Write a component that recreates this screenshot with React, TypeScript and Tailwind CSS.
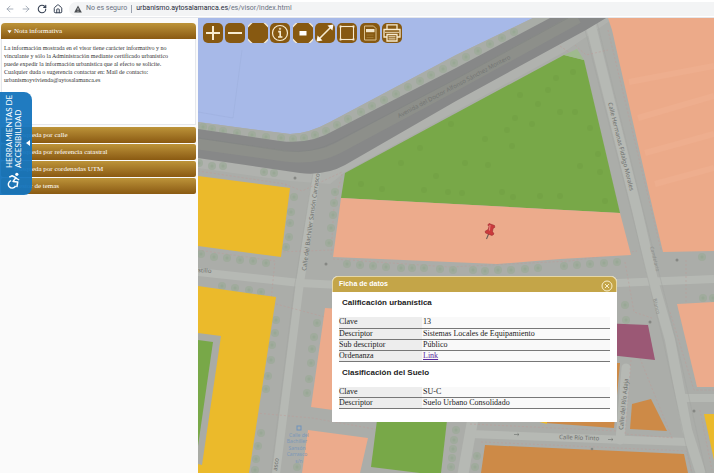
import { useState } from "react";
import { ArrowLeft, ArrowRight, House, RotateCw } from "lucide-react";

type Row = { label: string; value: string; href?: string };

const sections = [
  "Búsqueda por calle",
  "Búsqueda por referencia catastral",
  "Búsqueda por cordenadas UTM",
  "Gestor de temas",
];

const calificacion: Row[] = [
  { label: "Clave", value: "13" },
  { label: "Descriptor", value: "Sistemas Locales de Equipamiento" },
  { label: "Sub descriptor", value: "Público" },
  { label: "Ordenanza", value: "Link", href: "#ordenanza" },
];

const clasificacion: Row[] = [
  { label: "Clave", value: "SU-C" },
  { label: "Descriptor", value: "Suelo Urbano Consolidado" },
];

// icons are drawn on a 20x20 grid
const tools = [
  { name: "Acercar", icon: <path d="M10 3v14M3 10h14" strokeWidth="2" /> },
  { name: "Alejar", icon: <path d="M3 10h14" strokeWidth="2" /> },
  { name: "Vista completa", icon: <Corners /> },
  {
    name: "Información",
    icon: (
      <>
        <circle cx="10" cy="10" r="7.5" strokeWidth="1.2" />
        <path d="M8.2 8.6h2v5.2M8 14h4.4" strokeWidth="1.6" />
        <circle cx="10" cy="5.8" r="0.7" strokeWidth="1" />
      </>
    ),
  },
  {
    name: "Zoom por ventana",
    icon: (
      <>
        <Corners />
        <rect x="6.5" y="8" width="7" height="4.5" fill="#fff" stroke="none" />
      </>
    ),
  },
  {
    name: "Medir distancia",
    icon: (
      <>
        <path d="M4 16 16 4" strokeWidth="1.6" />
        <path d="M18.5 1.5 17.4 7.5 12.5 2.6ZM1.5 18.5 2.6 12.5 7.5 17.4Z" fill="#fffaf0" stroke="none" />
      </>
    ),
  },
  {
    name: "Medir área",
    icon: (
      <>
        <rect x="3.5" y="3.5" width="13" height="13" strokeWidth="1.1" />
        <path d="M2.6 3.5h1.8M15.6 3.5h1.8M2.6 16.5h1.8M15.6 16.5h1.8" strokeWidth="2" />
      </>
    ),
  },
  {
    name: "Ficha",
    icon: (
      <>
        <path d="M4.5 3h9l2.500 2.500V17H4.500Z" strokeWidth="1" stroke="#d9c08d" />
        <rect x="6" y="6" width="8.500" height="3.200" fill="#f3e7cc" stroke="none" />
        <path d="M6.500 12h7M6.500 14.500h7" strokeWidth="0.6" stroke="#b08b45" />
      </>
    ),
  },
  {
    name: "Imprimir",
    icon: (
      <>
        <path d="M5 6V1.8h10V6M5 14H2V6.5h16V14h-3" strokeWidth="1.3" />
        <path d="M3 9.3h14" strokeWidth="0.9" />
        <path d="M5 11.500h10v6.500H5Z" strokeWidth="1.300" />
        <path d="M6.500 13.800h7M6.500 15.900h7" strokeWidth="1" />
      </>
    ),
  },
];

const trees = [
  // avenue
  [203, 127], [212, 129], [223, 131], [237, 133], [252, 135], [266, 137], [281, 138], [293, 139],
  [304, 138], [315, 135], [326, 131], [337, 125], [348, 119], [361, 112], [372, 106], [384, 100],
  [396, 94], [408, 87], [420, 81], [431, 75], [443, 69], [454, 63], [466, 57], [478, 51], [490, 44],
  [502, 38], [514, 32],
  // left blocks
  [199, 163], [212, 166], [223, 166], [264, 172], [274, 173],
  [294, 197], [291, 212], [290, 223], [289, 237], [286, 247],
  [201, 254], [214, 257], [227, 258], [240, 260], [253, 261], [266, 263],
  [222, 286], [235, 288], [249, 290], [261, 292],
  [276, 320], [275, 333], [272, 345], [271, 360], [268, 376], [266, 389],
  [261, 433], [258, 446], [256, 459], [255, 470],
  [335, 192], [334, 203], [333, 215], [331, 228], [329, 243],
  [317, 323], [314, 337], [312, 349], [311, 363], [309, 379], [307, 393], [297, 467],
  // under the parcel
  [347, 264], [360, 265], [373, 266], [386, 267], [401, 268], [412, 268], [424, 268], [440, 269],
  [453, 270], [473, 270], [485, 271], [498, 270], [511, 270], [525, 269], [538, 268], [564, 266],
  [577, 265], [590, 264], [604, 263], [617, 262], [625, 305], [626, 320], [702, 257], [703, 298], [713, 298],
  [456, 430], [454, 440], [453, 449], [452, 458], [451, 467], [477, 456], [475, 467],
];

// trees seen through the park tint
const parkTrees = [
  [556, 78], [573, 72], [520, 95], [538, 104], [515, 118], [532, 124], [507, 130], [560, 112],
  [575, 112], [590, 128], [485, 139], [465, 163], [488, 165], [512, 146], [580, 166], [598, 154],
  [600, 172], [401, 163], [420, 148], [382, 189], [424, 190], [448, 192], [462, 193], [502, 192],
  [513, 197], [540, 196], [560, 196], [605, 201], [548, 90], [451, 124], [436, 176], [361, 184],
];

function Corners() {
  return (
    <path
      d="M0 4.500V2.500L2.500 0H4.500ZM20 4.500V2.500L17.500 0H15.500ZM0 15.500v2L2.500 20h2ZM20 15.500v2L17.500 20h-2Z"
      fill="#f7ecd6"
      stroke="none"
    />
  );
}

function BrowserBar() {
  return (
    <header className="flex h-[18px] shrink-0 items-center border-b border-gray-200 bg-white pl-[5px] text-[7px]">
      <nav className="flex items-center gap-[6px]">
        <button aria-label="Atrás" className="text-gray-400">
          <ArrowLeft size={10} />
        </button>
        <button aria-label="Adelante" className="text-gray-400">
          <ArrowRight size={10} />
        </button>
        <button aria-label="Recargar" className="text-gray-700">
          <RotateCw size={10} strokeWidth={2.6} />
        </button>
        <button aria-label="Inicio" className="text-gray-700">
          <House size={10} strokeWidth={2.4} />
        </button>
      </nav>
      <div className="ml-[6px] flex h-[14px] flex-1 items-center rounded-l-full bg-[#f3f4f5] pl-[5px] font-[Roboto,sans-serif]">
        <svg viewBox="0 0 10 10" className="h-2 w-2">
          <path d="M5 .5 9.8 9.5H.2Z" fill="#4b4e52" />
          <path d="M5 4v2.6M5 7.4v1" stroke="#f3f4f5" />
        </svg>
        <span className="ml-1 text-gray-500">No es seguro</span>
        <span className="mx-1 h-2 w-px bg-gray-400" />
        <span className="text-gray-500">
          <span className="text-gray-800">urbanismo.aytosalamanca.es</span>
          /es/visor/index.html
        </span>
      </div>
    </header>
  );
}

function Sidebar() {
  return (
    <aside className="relative w-[198px] shrink-0 bg-[#fafafa] px-px pt-[5px] font-['Liberation_Serif',serif]">
      <div className="mr-px">
        <button className="flex h-4 w-full items-center gap-[2px] rounded-t-sm bg-linear-to-b from-[#bd9439] to-[#8a5a12] pl-[6px] text-[7px] text-white">
          <svg viewBox="0 0 6 6" className="h-[5px] w-[5px]">
            <path d="M.5 1.5h5L3 5Z" fill="currentColor" />
          </svg>
          Nota informativa
        </button>
        <p className="h-[86px] border border-t-0 border-gray-200 bg-white px-[2px] pt-[5px] text-[6px] leading-[8px] text-[#333]">
          La información mostrada en el visor tiene carácter informativo y no
          <br />
          vinculante y sólo la Administración mediante certificado urbanístico
          <br />
          puede expedir la información urbanística que al efecto se solicite.
          <br />
          Cualquier duda o sugerencia contactar en: Mail de contacto:
          <br />
          urbanismoyvivienda@aytosalamanca.es
        </p>
        <div className="mt-[2px] flex flex-col gap-px">
          {sections.map((s) => (
            <button
              key={s}
              className="h-4 rounded-xs bg-linear-to-b from-[#bd9439] to-[#8a5a12] pl-[13px] text-left text-[7px] text-white"
            >
              {s}
            </button>
          ))}
        </div>
      </div>

      <button className="absolute top-[74px] left-0 flex h-[103px] w-8 rounded-r-lg bg-[#1474bd]/95 font-['Lato',sans-serif] text-white">
        <span className="flex h-full w-7 rotate-180 items-center justify-start gap-1 pt-[6px] text-left text-[8px] leading-[9px] [writing-mode:vertical-rl]">
          <svg viewBox="0 0 14 18" className="h-[17px] w-[14px] shrink-0 rotate-180" fill="none" stroke="#fff">
            <circle cx="10" cy="2.500" r="1.700" fill="#fff" stroke="none" />
            <path d="M2 5.500 5 4 9 6 6 10l5 .5-1 5.500" strokeWidth="1.600" strokeLinejoin="round" />
            <path d="M4 9.200a4 4 0 1 0 4.700 5.500" strokeWidth="1.500" />
            <path d="M9 6.500 12.500 8.500" strokeWidth="1.300" />
          </svg>
          <span>
            HERRAMIENTAS DE
            <br />
            ACCESIBILIDAD
          </span>
        </span>
        <svg viewBox="0 0 4 6" className="absolute top-12 right-[2px] h-[6px] w-1">
          <path d="M4 0v6L0 3Z" fill="#fff" />
        </svg>
      </button>
    </aside>
  );
}

function CityMap() {
  return (
    <svg
      viewBox="198 18 516 455"
      preserveAspectRatio="xMinYMin slice"
      className="absolute inset-0 h-full w-full font-['Noto_Sans',sans-serif]"
      role="img"
      aria-label="Mapa urbanístico"
    >
      <rect x="198" y="18" width="516" height="455" fill="#abada9" />

      {/* campus */}
      <path d="M198 18H533L508 30 456 55 330 122Q308 134 290 134L250 129 198 122Z" fill="#a7b9e8" />
      <path d="M242 50 233 118 198 112" fill="none" stroke="#9db0de" strokeWidth=".6" />

      {/* sidewalk north of the avenue */}
      <path d="M198 122 250 129 290 134Q308 134 330 122L456 55 533 18H550L456 68 335 130Q310 145 290 142L198 129Z" fill="#a9ada7" />

      {/* streets */}
      <path d="M198 158 300 173Q325 176 345 165L456 101 606 18H614L564 52 345 172 330 184 290 181 198 168Z" fill="#b0b2ae" />
      <g fill="none" stroke="#b6b9b4" strokeWidth="8">
        <path d="M318 168 314 190 299 290 276 474" />
        <path d="M198 272 300 283 340 285 450 290 617 283 714 279" />
        <path d="M589 18 592 30 637 210 653 280 670 340 687 430 701 474" strokeWidth="10" />
        <path d="M470 434 600 439 688 442" />
        <path d="M626 368 620 440" strokeWidth="9" strokeLinecap="round" />
        <path d="M684 398H714" />
        <path d="M473 418 463 474" strokeWidth="11" />
      </g>
      <g fill="none" stroke="#a3a5a1" strokeWidth=".5">
        <path d="M313 173 294 290 271 473M596 18 643 210 676 340 706 473M582 18 631 210 663 340 692 473" />
      </g>
      <g fill="none" stroke="#c09a97" strokeWidth=".6" strokeDasharray="2 2" opacity=".8">
        <path d="M198 171 285 184 302 191 342 172M286 184 276 252 333 250M198 250 275 261 270 310" />
        <path d="M342 174 334 205 331 256M276 304 325 317M256 413 312 418 380 430M333 259 450 267 570 261 637 251" />
        <path d="M575 45 586 55 608 50M446 170 560 106M560 46 580 60M608 30 661 250 714 250M625 262 634 312 652 318" />
        <path d="M637 351 672 438M631 360 625 434 674 438M686 260V302M670 312 694 390 714 390M470 424 617 431M481 442 686 451 692 473M700 410 712 470" />
      </g>

      {/* trees */}
      <g fill="#9dab99" opacity=".75">
        {trees.map(([x, y], i) => (
          <circle key={i} cx={x} cy={y} r="4" />
        ))}
      </g>
      <g fill="#96a792" opacity=".7">
        {trees.map(([x, y], i) => (
          <circle key={i} cx={x} cy={y} r="1.5" />
        ))}
      </g>

      {/* avenue */}
      <path d="M198 129 280 141Q310 145 335 130L456 68 550 18H606L586 30 456 101 345 165Q325 176 300 173L198 158Z" fill="#878888" />
      <path d="M198 144 285 156Q315 160 338 148L456 85 578 18" fill="none" stroke="#8d8f8a" strokeWidth="11" />
      <path d="M198 138 285 151Q312 154 335 142L456 79 568 18" fill="none" stroke="#828483" strokeWidth=".6" />

      {/* parcels */}
      <path d="M345 173 564 55 584 60 620 213 341 198Z" fill="#78a848" />
      <path d="M564 55 577 49 584 60Z" fill="#9fba8e" />
      <g fill="#73a245" opacity=".7">
        {parkTrees.map(([x, y], i) => (
          <circle key={i} cx={x} cy={y} r="3" />
        ))}
      </g>
      <path d="M341 198 620 213 631 255 560 259 497 264 333 257Z" fill="#ecab8c" />
      <path d="M608 18H714V251L663 252 653 210 612 30Z" fill="#ecaa89" />
      <g stroke="#eeae8e" strokeWidth="6" fill="none">
        <path d="M629 82 714 66M638 118 714 96M645 153 714 134M655 184 714 168" />
      </g>
      <path d="M198 176 290 188 281 257 198 246Z" fill="#ebba2b" />
      <path d="M198 286 276 297 249 473H198Z" fill="#ebba2b" />
      <path d="M198 333 221 336 202 465 198 464Z" fill="#a9aba5" />
      <path d="M198 340 213 342 198 446Z" fill="#78a848" />
      <path d="M325 308 340 309V411L311 407Z" fill="#ecab8c" />
      <path d="M308 430 368 438 360 473H302Z" fill="#ecab8c" />
      <path d="M377 420H447L441 473H420L371 467Z" fill="#78a848" />
      <path d="M600 323 648 325 655 360 600 354Z" fill="#9b5875" />
      <path d="M677 304 714 302V387H697Z" fill="#ecab8c" />
      <path d="M610 363H620L614 428 545 423V410Z" fill="#cd8a47" />
      <path d="M532 420H547V424Z" fill="#ebba2b" />
      <path d="M632 404 651 399 667 431 630 429Z" fill="#cd8a47" />
      <path d="M485 445 684 454 688 473H481Z" fill="#cd8a47" />
      <path d="M704 414H714V460Z" fill="#ebba2b" />
      <g fill="#858783">
        <circle cx="295" cy="178" r="1.5" />
        <circle cx="326" cy="264" r="1.5" />
        <circle cx="677" cy="260" r="1.5" />
        <circle cx="650" cy="322" r="1.5" />
        <circle cx="592" cy="449" r="1.3" />
        <circle cx="694" cy="411" r="1.5" />
      </g>

      {/* street names */}
      <g fontSize="6" fill="#6c6e6b">
        <text transform="translate(306 271) rotate(-82)">Calle del Bachiller Sansón Carrasco</text>
        <text transform="translate(608 103) rotate(76)">Calle Hermanas Fidalgo Morales</text>
        <text transform="translate(399 118) rotate(-28)" fill="#747674">
          Avenida del Doctor Alfonso Sánchez Montero
        </text>
        <text transform="translate(198 272) rotate(5)">stillo</text>
        <text transform="translate(277 471) rotate(-82)">asco</text>
        <text transform="translate(559 439) rotate(2)">Calle Río Tinto</text>
        <text transform="translate(623 430) rotate(-84)">Calle del Río Adaja</text>
        <text transform="translate(650 247) rotate(76)" fontSize="5" fill="#8b8d8a">Candelario</text>
        <text transform="translate(653 299) rotate(76)" fontSize="5" fill="#8b8d8a">Blanco</text>
      </g>
      <g fill="none" stroke="#6c6e6b" strokeWidth=".6">
        <path d="M514 434.500h5M517.500 433.300l1.500 1.200-1.500 1.200M608 439.500h5M611.500 438.300l1.500 1.200-1.500 1.200" />
      </g>
      <g fontSize="5" fill="#7c98b8" textAnchor="middle">
        <rect x="297" y="426" width="4" height="4" fill="none" stroke="#6f93bd" />
        <text x="299" y="437">Calle del</text>
        <text x="297" y="443">Bachiller</text>
        <text x="297" y="450">Sansón</text>
        <text x="297" y="456">Carrasco</text>
        <text x="299" y="463">s/n</text>
      </g>

      {/* pushpin */}
      <path d="M489 233 486.500 239" stroke="#6b5a55" strokeWidth="1.100" />
      <path
        d="M489 223.500 494.500 225.500 494.800 227.300 493 228.500 492.500 231.500 494 234 492 235.500 485.500 233 485.200 231.200 488.200 229.500 489 226.500 487.800 225Z"
        fill="#cb3a3c"
        stroke="#9c2b30"
        strokeWidth=".6"
      />
      <path d="M490 225 489.500 230.500" stroke="#ec8a86" strokeWidth="1" />
    </svg>
  );
}

function Toolbar() {
  return (
    <div className="absolute top-[5px] left-[5px] flex w-[199px] justify-between">
      {tools.map((t) => (
        <button key={t.name} aria-label={t.name} className="h-5 w-5 rounded-[5px] bg-[#875911]">
          <svg viewBox="0 0 20 20" className="h-5 w-5" fill="none" stroke="#f7ebd0">
            {t.icon}
          </svg>
        </button>
      ))}
    </div>
  );
}

function DataTable({ title, rows }: { title: string; rows: Row[] }) {
  return (
    <section className="pt-[5px]">
      <h2 className="mb-2 pl-[3px] font-['Liberation_Sans',sans-serif] text-[8px] leading-3 font-bold text-[#222]">
        {title}
      </h2>
      <table className="w-full border-collapse text-[8px] leading-[10px] text-[#222]">
        <tbody>
          {rows.map((r) => (
            <tr key={r.label} className="h-[11px] border-b border-[#777]">
              <th scope="row" className="w-[83px] bg-[#ededed] p-0 text-left font-normal">
                {r.label}
              </th>
              <td className="bg-[#f9f9f9] p-0 pl-px">
                {r.href ? (
                  <a href={r.href} className="text-[#5b2a9d] underline">
                    {r.value}
                  </a>
                ) : (
                  r.value
                )}
              </td>
            </tr>
          ))}
        </tbody>
      </table>
    </section>
  );
}

function FichaDialog({ onClose }: { onClose: () => void }) {
  return (
    <div
      role="dialog"
      aria-label="Ficha de datos"
      className="absolute top-[258px] left-[134px] w-[285px] overflow-hidden rounded-t-md bg-white font-['Liberation_Serif',serif]"
    >
      <div className="flex h-4 items-center justify-between rounded-t-md border border-b-0 border-[#e6d7a6] bg-[#c4a548] pr-[3px] pl-[6px]">
        <span className="font-['Liberation_Sans',sans-serif] text-[7px] font-bold text-white">Ficha de datos</span>
        <button aria-label="Cerrar" onClick={onClose} className="pt-[2px]">
          <svg viewBox="0 0 12 12" className="h-3 w-3" fill="none" stroke="#f8eecb">
            <circle cx="6" cy="6" r="5" />
            <path d="m4 4 4 4M8 4 4 8" />
          </svg>
        </button>
      </div>
      <div className="px-[7px] pb-[13px]">
        <DataTable title="Calificación urbanística" rows={calificacion} />
        <DataTable title="Clasificación del Suelo" rows={clasificacion} />
      </div>
    </div>
  );
}

export default function App() {
  const [open, setOpen] = useState(true);

  return (
    <div className="flex min-h-screen flex-col bg-white">
      <BrowserBar />
      <main className="flex flex-1 pb-[3px]">
        <Sidebar />
        <div className="relative flex-1 overflow-hidden">
          <CityMap />
          <Toolbar />
          {open && <FichaDialog onClose={() => setOpen(false)} />}
        </div>
      </main>
    </div>
  );
}
